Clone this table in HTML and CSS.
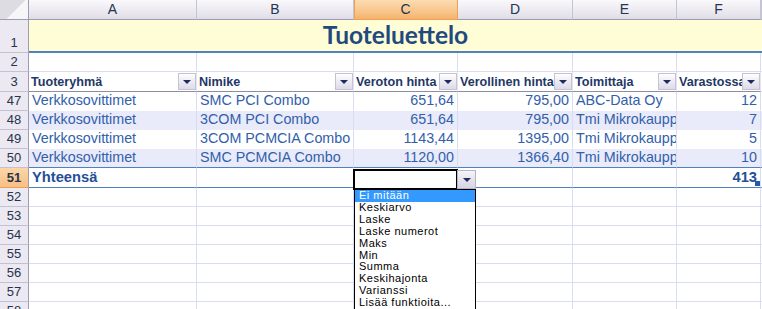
FILE: index.html
```html
<!DOCTYPE html>
<html lang="fi">
<head>
  <meta charset="UTF-8">
  <title>Tuoteluettelo</title>
  <link rel="stylesheet" href="styles.css">
</head>
<body>
  <div class="sheet">
    <div class="row colhead">
      <div class="corner"></div>
      <div>A</div><div>B</div><div class="sel">C</div><div>D</div><div>E</div><div>F</div><div></div>
    </div>
    <div class="row title-row">
      <div class="rh">1</div>
      <div class="title">Tuoteluettelo</div>
    </div>
    <div class="row">
      <div class="rh">2</div><div></div><div></div><div></div><div></div><div></div><div></div><div></div>
    </div>
    <div class="row thead">
      <div class="rh">3</div>
      <div class="th"><span>Tuoteryhmä</span><i class="dd"></i></div>
      <div class="th"><span>Nimike</span><i class="dd"></i></div>
      <div class="th"><span>Veroton hinta</span><i class="dd"></i></div>
      <div class="th"><span>Verollinen hinta</span><i class="dd"></i></div>
      <div class="th"><span>Toimittaja</span><i class="dd"></i></div>
      <div class="th"><span>Varastossa</span><i class="dd"></i></div>
      <div></div>
    </div>
    <div class="row data">
      <div class="rh">47</div>
      <div>Verkkosovittimet</div><div>SMC PCI Combo</div><div class="n">651,64</div><div class="n">795,00</div><div>ABC-Data Oy</div><div class="n">12</div><div></div>
    </div>
    <div class="row data band">
      <div class="rh">48</div>
      <div>Verkkosovittimet</div><div>3COM PCI Combo</div><div class="n">651,64</div><div class="n">795,00</div><div>Tmi Mikrokaupp</div><div class="n">7</div><div></div>
    </div>
    <div class="row data">
      <div class="rh">49</div>
      <div>Verkkosovittimet</div><div>3COM PCMCIA Combo</div><div class="n">1143,44</div><div class="n">1395,00</div><div>Tmi Mikrokaupp</div><div class="n">5</div><div></div>
    </div>
    <div class="row data band last">
      <div class="rh">50</div>
      <div>Verkkosovittimet</div><div>SMC PCMCIA Combo</div><div class="n">1120,00</div><div class="n">1366,40</div><div>Tmi Mikrokaupp</div><div class="n">10</div><div></div>
    </div>
    <div class="row total">
      <div class="rh sel">51</div>
      <div>Yhteensä</div>
      <div></div>
      <div class="active">
        <div class="combo"></div>
        <i class="combo-btn"></i>
        <ul class="combo-list">
          <li class="hl">Ei mitään</li>
          <li>Keskiarvo</li>
          <li>Laske</li>
          <li>Laske numerot</li>
          <li>Maks</li>
          <li>Min</li>
          <li>Summa</li>
          <li>Keskihajonta</li>
          <li>Varianssi</li>
          <li>Lisää funktioita...</li>
        </ul>
      </div>
      <div></div><div></div>
      <div class="n handle">413</div>
      <div></div>
    </div>
    <div class="row"><div class="rh">52</div><div></div><div></div><div></div><div></div><div></div><div></div><div></div></div>
    <div class="row"><div class="rh">53</div><div></div><div></div><div></div><div></div><div></div><div></div><div></div></div>
    <div class="row"><div class="rh">54</div><div></div><div></div><div></div><div></div><div></div><div></div><div></div></div>
    <div class="row"><div class="rh">55</div><div></div><div></div><div></div><div></div><div></div><div></div><div></div></div>
    <div class="row"><div class="rh">56</div><div></div><div></div><div></div><div></div><div></div><div></div><div></div></div>
    <div class="row"><div class="rh">57</div><div></div><div></div><div></div><div></div><div></div><div></div><div></div></div>
    <div class="row"><div class="rh">58</div><div></div><div></div><div></div><div></div><div></div><div></div><div></div></div>
  </div>
</body>
</html>
```

FILE: styles.css
```css
* {box-sizing: border-box;}
body {
  margin: 0;
  background: #fff;
  font-family: "Liberation Sans", Arial, sans-serif;
  overflow: hidden;
}
.sheet {width: 762px;}
.row {
  display: grid;
  grid-template-columns: 29px 168px 157px 104px 115px 104px 84px 1fr;
  height: 19px;
}
.row > div {
  display: flex;
  align-items: flex-end;
  min-width: 0;
  overflow: hidden;
  white-space: nowrap;
  border-right: 1px solid #dadcf0;
  border-bottom: 1px solid #dadcf0;
  padding: 0 3px 1px;
  font-size: 14.3px;
  line-height: 17px;
  color: #3160aa;
}
.row > .n {justify-content: flex-end;}

/* column letters */
.colhead {height: 20px;}
.colhead > div {
  justify-content: center;
  align-items: center;
  padding: 0;
  font-size: 14px;
  color: #26344d;
  background: linear-gradient(to bottom, #f9f8fb 0%, #ebe9f0 60%, #dfdce7 100%);
  border-right: 1px solid #c6c4d4;
  border-bottom: 1px solid #9d9cb2;
}
.colhead > .sel {
  background: linear-gradient(to bottom, #fbdcb2 0%, #f8c68c 60%, #f4b26c 100%);
  border-right-color: #f0a050;
  border-bottom-color: #f0a050;
  box-shadow: inset 1px 0 0 #f0a050;
}
.colhead > .corner {
  background: linear-gradient(135deg, #dddce3 55%, #f6f6f8 55%) no-repeat,
              #dddce3;
  background-size: 100% 100%;
  border-right-color: #9d9cb2;
}

/* row numbers */
.row > .rh {
  justify-content: center;
  padding: 0 0 1px;
  font-size: 13px;
  color: #26344d;
  background: #ece9f2;
  border-right: 1px solid #9d9cb2;
  border-bottom: 1px solid #c3c2d2;
}
.row > .rh.sel {
  background: linear-gradient(to bottom, #fbd6a8 0%, #f7bf84 100%);
  border-bottom-color: #f0a050;
}

/* title */
.title-row {
  height: 33px;
  grid-template-columns: 29px 1fr;
}
.row > .title {
  justify-content: center;
  background: #fffdd5;
  border-right: none;
  border-bottom: 2px solid #4f81bd;
  padding-bottom: 3px;
  font-family: Lato, "Liberation Sans", sans-serif;
  font-weight: 700;
  font-size: 24.5px;
  line-height: 26px;
  color: #1f4a80;
}

/* table header with filter buttons */
.thead {height: 20px;}
.row > .th {
  align-items: center;
  padding: 0 0 0 2px;
  border-bottom-color: #8e8da2;
  border-right-color: #e4e5f4;
  font-size: 12.6px;
  font-weight: bold;
  color: #1f3866;
}
.th span {
  flex: 1;
  overflow: hidden;
  padding-top: 1px;
}
.dd {
  flex: none;
  width: 18px;
  height: 17px;
  border: 1px solid #c3c3d4;
  background: linear-gradient(to bottom, #ffffff 0%, #eceaf3 50%, #dedbe8 100%);
  position: relative;
}
.dd::after,
.combo-btn::after {
  content: "";
  position: absolute;
  left: 4px;
  top: 6px;
  border-left: 4px solid transparent;
  border-right: 4px solid transparent;
  border-top: 4px solid #1e2b5c;
}

/* data rows */
.data > div {border-bottom-color: transparent;}
.band > div {background: #e9ebfa;}
.data > .rh {background: #ece9f2; border-bottom-color: #c3c2d2;}
.last > div {border-bottom-color: #4f81bd;}
.last > .rh {border-bottom-color: #c3c2d2;}

/* totals row */
.total {height: 20px;}
.total > div {
  border-bottom-color: #4f81bd;
  font-weight: bold;
  font-size: 14.7px;
  color: #244f98;
}
.row > .active {overflow: visible; position: relative;}
.row > .handle {overflow: visible; position: relative;}
.handle::after {
  content: "";
  position: absolute;
  right: 0;
  bottom: 1px;
  width: 5px;
  height: 5px;
  background: #2d55a5;
}

/* aggregate picker */
.combo {
  position: absolute;
  left: -1px;
  top: 1px;
  width: 105px;
  height: 21px;
  border: 2px solid #000;
  background: #fff;
  z-index: 2;
}
.combo-btn {
  position: absolute;
  left: 103px;
  top: 2px;
  width: 19px;
  height: 19px;
  border: 1px solid #b5b4c8;
  background: linear-gradient(to bottom, #f6f5f9 0%, #e6e3ee 50%, #d8d4e4 100%);
  z-index: 2;
}
.combo-btn::after {left: 5px; top: 7px;}
.combo-list {
  position: absolute;
  left: 0;
  top: 21px;
  width: 122px;
  height: 130px;
  margin: 0;
  padding: 0;
  list-style: none;
  background: #fff;
  border: 1px solid #000;
  z-index: 3;
  font-family: "Liberation Sans", Arial, sans-serif;
  font-weight: normal;
  font-size: 11px;
  line-height: 11.9px;
  letter-spacing: 0.5px;
  color: #000;
}
.combo-list li {padding-left: 4px;}
.combo-list .hl {background: #3399ff; color: #fff;}
```
